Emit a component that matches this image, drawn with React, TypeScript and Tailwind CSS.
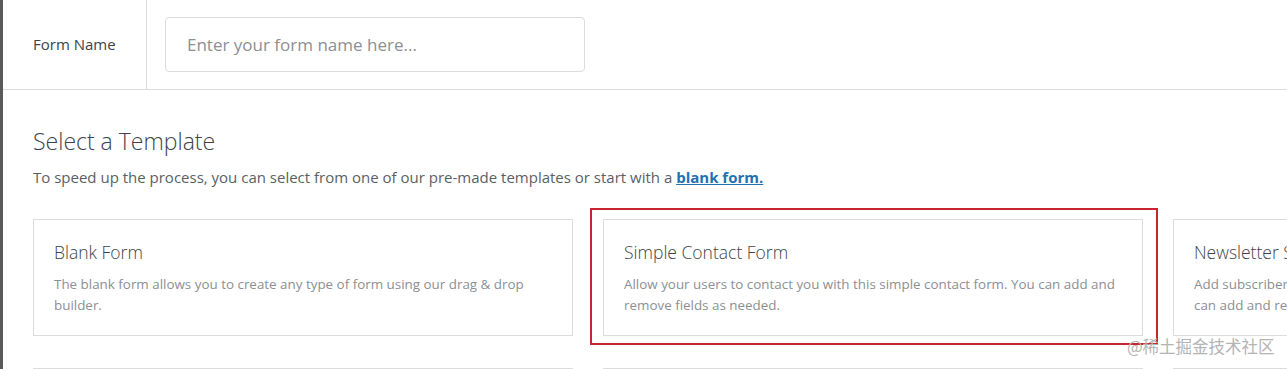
import React from 'react';

type Template = {
  title: string;
  description: string;
  selected?: boolean;
};

const templates: Template[] = [
  {
    title: 'Blank Form',
    description:
      'The blank form allows you to create any type of form using our drag & drop builder.',
  },
  {
    title: 'Simple Contact Form',
    description:
      'Allow your users to contact you with this simple contact form. You can add and remove fields as needed.',
    selected: true,
  },
  {
    title: 'Newsletter Signup Form',
    description:
      'Add subscribers and grow your email list with this newsletter signup form. You can add and remove fields as needed.',
  },
  {
    title: 'Suggestion Form',
    description:
      'Ask your users for suggestions with this simple form template. You can add and remove fields as needed.',
  },
  {
    title: 'Request a Quote Form',
    description:
      'Start collecting leads with this pre-made Request a quote form. You can add and remove fields as needed.',
  },
  {
    title: 'Donation Form',
    description:
      'Start collecting donation payments on your website with this ready-made Donation form.',
  },
];

function TemplateCard({ title, description, selected }: Template) {
  return (
    <div className="relative h-[117px] border border-[#dcdcde] bg-white px-[20px] pt-[20px]">
      <h3 className="whitespace-nowrap text-[17.5px] leading-[24px] font-light text-[#3c434a]">
        {title}
      </h3>
      <p className="mt-[10px] text-[13.4px] leading-[21px] text-[#8c8f94]">
        {description}
      </p>
      {selected && (
        <div className="pointer-events-none absolute -left-[14px] -right-[16px] -top-[12px] -bottom-[10px] border-2 border-[#c8262f]" />
      )}
    </div>
  );
}

export default function App() {
  return (
    <div
      className="relative flex h-screen overflow-hidden bg-white"
      style={{ fontFamily: '"Open Sans", "Liberation Sans", sans-serif' }}
    >
      <div className="w-[3px] shrink-0 bg-[#5a5a5a]" />
      <div className="min-w-0 flex-1">
        <header className="flex h-[90px] border-b border-[#dcdcde]">
          <div className="flex w-[144px] shrink-0 items-center border-r border-[#dcdcde] pl-[30px] text-[15px] text-[#3c434a]">
            Form Name
          </div>
          <div className="flex items-center pl-[18px]">
            <input
              type="text"
              placeholder="Enter your form name here..."
              className="h-[55px] w-[420px] rounded-[4px] border border-[#dcdcde] px-[21px] text-[17px] text-[#3c434a] placeholder:text-[#8c8f94] outline-none"
            />
          </div>
        </header>
        <section className="pl-[30px] pt-[37px]">
          <h2 className="text-[23px] leading-[28px] font-light text-[#3c434a]">
            Select a Template
          </h2>
          <p className="mt-[12px] text-[15px] leading-[20px] text-[#5a5f64]">
            To speed up the process, you can select from one of our pre-made
            templates or start with a{' '}
            <a href="#" className="font-bold text-[#2271b1] underline">
              blank form.
            </a>
          </p>
          <div className="mt-[32px] grid grid-cols-[repeat(3,540px)] gap-x-[30px] gap-y-[32px]">
            {templates.map((t) => (
              <TemplateCard key={t.title} {...t} />
            ))}
          </div>
        </section>
      </div>
      <div
        className="pointer-events-none absolute left-[1127px] top-[335px] whitespace-nowrap text-[16.5px] leading-[22px] text-[#b4b4b4]"
        style={{ fontFamily: '"Noto Sans CJK SC", sans-serif' }}
      >
        @稀土掘金技术社区
      </div>
    </div>
  );
}
